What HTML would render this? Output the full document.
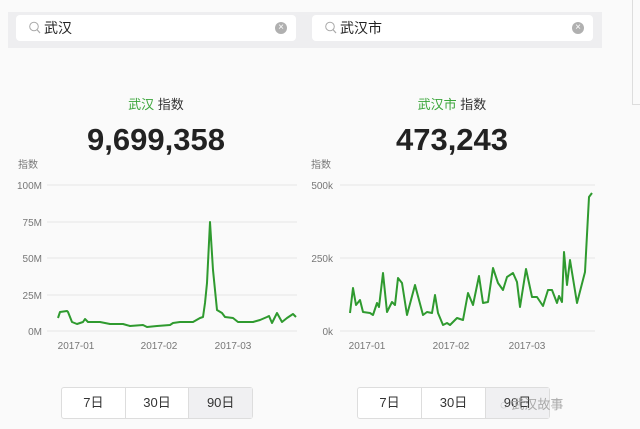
<!DOCTYPE html>
<html><head><meta charset="utf-8"><style>
body{margin:0;width:640px;height:429px;background:#fafafa;position:relative;overflow:hidden;font-family:"Liberation Sans","Noto Sans CJK SC",sans-serif;}
.a{position:absolute}
.band{left:8px;top:12px;width:594px;height:36px;background:#eeeef0}
.inp{top:15px;height:26px;background:#fff;border-radius:4px;font-size:14px;color:#222;line-height:26px}
.inp svg{position:absolute;left:12px;top:6px}
.inp span{position:absolute;left:28px}
.x{position:absolute;right:9px;top:7px;width:12px;height:12px;border-radius:50%;background:#b0b0b0;color:#fff;font-size:10px;line-height:12px;text-align:center}
.ttl{font-size:13px;color:#333;text-align:center;width:200px}
.g{color:#3aa53a}
.num{font-size:31px;font-weight:bold;color:#222;text-align:center;width:250px}
.lab{font-size:10px;color:#777}
.btns{top:387px;height:30px;border:1px solid #ddd;border-radius:3px;background:#fff;display:flex;font-size:13px;color:#333}
.btns div{flex:1;text-align:center;line-height:30px;border-right:1px solid #ddd}
.btns div:last-child{border-right:none;background:#f0f0f2}
</style></head><body>
<div class="a" style="left:632px;top:0;width:1px;height:105px;background:#ddd"></div>
<div class="a" style="left:632px;top:104px;width:8px;height:1px;background:#ddd"></div>
<div class="a band"></div>
<div class="a inp" style="left:16px;width:280px"><svg width="13" height="13"><circle cx="6" cy="5.5" r="4.3" fill="none" stroke="#aaa" stroke-width="1"/><line x1="9" y1="8.6" x2="12" y2="12" stroke="#aaa" stroke-width="1.2"/></svg><span>武汉</span><div class="x">×</div></div>
<div class="a inp" style="left:312px;width:281px"><svg width="13" height="13"><circle cx="6" cy="5.5" r="4.3" fill="none" stroke="#aaa" stroke-width="1"/><line x1="9" y1="8.6" x2="12" y2="12" stroke="#aaa" stroke-width="1.2"/></svg><span>武汉市</span><div class="x">×</div></div>
<div class="a ttl" style="left:56px;top:94px"><span class="g">武汉</span> 指数</div>
<div class="a ttl" style="left:352px;top:94px"><span class="g">武汉市</span> 指数</div>
<div class="a num" style="left:31px;top:122px">9,699,358</div>
<div class="a num" style="left:327px;top:122px">473,243</div>
<div class="a lab" style="left:18px;top:156px">指数</div>
<div class="a lab" style="left:311px;top:156px">指数</div>
<svg class="a" style="left:0;top:0" width="640" height="429">
<g stroke="#e6e6e6" stroke-width="1">
<line x1="47" y1="185" x2="297" y2="185"/><line x1="47" y1="222" x2="297" y2="222"/><line x1="47" y1="258" x2="297" y2="258"/><line x1="47" y1="295" x2="297" y2="295"/><line x1="47" y1="331" x2="297" y2="331"/>
<line x1="340" y1="185" x2="595" y2="185"/><line x1="340" y1="258" x2="595" y2="258"/><line x1="340" y1="331" x2="595" y2="331"/>
</g>
<g font-size="10" fill="#777" text-anchor="end" font-family="Liberation Sans">
<text x="42" y="189">100M</text><text x="42" y="226">75M</text><text x="42" y="262">50M</text><text x="42" y="299">25M</text><text x="42" y="335">0M</text>
<text x="333" y="189">500k</text><text x="333" y="262">250k</text><text x="333" y="335">0k</text>
</g>
<g font-size="10" fill="#777" text-anchor="middle" font-family="Liberation Sans">
<text x="76" y="349">2017-01</text><text x="159" y="349">2017-02</text><text x="233" y="349">2017-03</text>
<text x="367" y="349">2017-01</text><text x="451" y="349">2017-02</text><text x="527" y="349">2017-03</text>
</g>
<polyline fill="none" stroke="#2f9a2f" stroke-width="2" stroke-linejoin="round" points="58,318 60,312 67,311 68,312 72,322 77,324 83,322 85,319 88,322 100,322 110,324 123,324 130,326 143,325 147,327 157,326 170,325 173,323 180,322 193,322 200,318 203,317 205,303 207,283 210,222 213,270 217,310 222,313 225,317 233,318 238,322 253,322 260,320 267,317 269,316 272,323 277,313 282,322 287,318 293,314 296,317"/>
<polyline fill="none" stroke="#2f9a2f" stroke-width="2" stroke-linejoin="round" points="350,313 353,288 356,305 360,300 363,312 370,313 373,315 377,303 379,307 383,273 387,312 392,302 395,305 398,278 402,283 407,315 415,285 423,315 427,312 432,313 435,295 438,313 443,325 447,323 450,325 457,318 463,320 468,293 473,305 479,276 483,303 488,302 493,268 498,283 503,290 507,277 513,273 517,282 520,307 526,269 532,297 537,297 543,306 548,290 552,290 557,303 559,296 562,302 564,252 567,285 570,260 577,303 585,272 589,197 592,193"/>
</svg>
<div class="a btns" style="left:61px;width:190px"><div>7日</div><div>30日</div><div>90日</div></div>
<div class="a btns" style="left:357px;width:191px"><div>7日</div><div>30日</div><div>90日</div></div>
<div class="a" style="left:500px;top:394px;font-size:13px;color:#aaa">◌ 武汉故事</div>
</body></html>
